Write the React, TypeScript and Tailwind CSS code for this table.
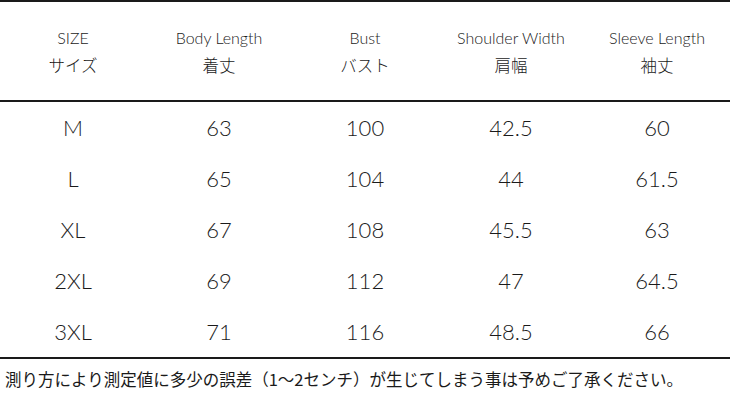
const HEAD = [
  { en: "SIZE", ja: "サイズ" },
  { en: "Body Length", ja: "着丈" },
  { en: "Bust", ja: "バスト" },
  { en: "Shoulder Width", ja: "肩幅" },
  { en: "Sleeve Length", ja: "袖丈" },
];

const ROWS = [
  ["M", "63", "100", "42.5", "60"],
  ["L", "65", "104", "44", "61.5"],
  ["XL", "67", "108", "45.5", "63"],
  ["2XL", "69", "112", "47", "64.5"],
  ["3XL", "71", "116", "48.5", "66"],
];

const latin = "font-['Lato','Noto_Sans','Noto_Sans_CJK_JP',sans-serif]";
const jp = "font-['Noto_Sans_CJK_JP',sans-serif]";

export default function App() {
  return (
    <div className="h-[400px] w-[730px] overflow-hidden bg-white text-[#1a1a1a]">
      <div className="border-t-2 border-[#1a1a1a]">
        <div className="grid h-[100px] grid-cols-5 border-b-2 border-[#1a1a1a] pt-[25px]">
          {HEAD.map((h) => (
            <div key={h.en} className="flex flex-col items-center">
              <span className={`${latin} text-[16px] leading-[22px] font-light`}>{h.en}</span>
              <span className={`${jp} mt-[5px] text-[16.5px] leading-[22px] font-light`}>{h.ja}</span>
            </div>
          ))}
        </div>
        {ROWS.map((r) => (
          <div key={r[0]} className="grid h-[51px] grid-cols-5 items-center">
            {r.map((c, i) => (
              <div key={i} className={`${latin} text-center text-[22px] leading-none font-light`}>
                {c}
              </div>
            ))}
          </div>
        ))}
      </div>
      <div className="border-t-2 border-[#1a1a1a] pt-[8px] pl-[5px]">
        <p className={`${jp} whitespace-nowrap text-[16.5px] leading-[24px]`}>
          測り方により測定値に多少の誤差（1～2センチ）が生じてしまう事は予めご了承ください。
        </p>
      </div>
    </div>
  );
}
